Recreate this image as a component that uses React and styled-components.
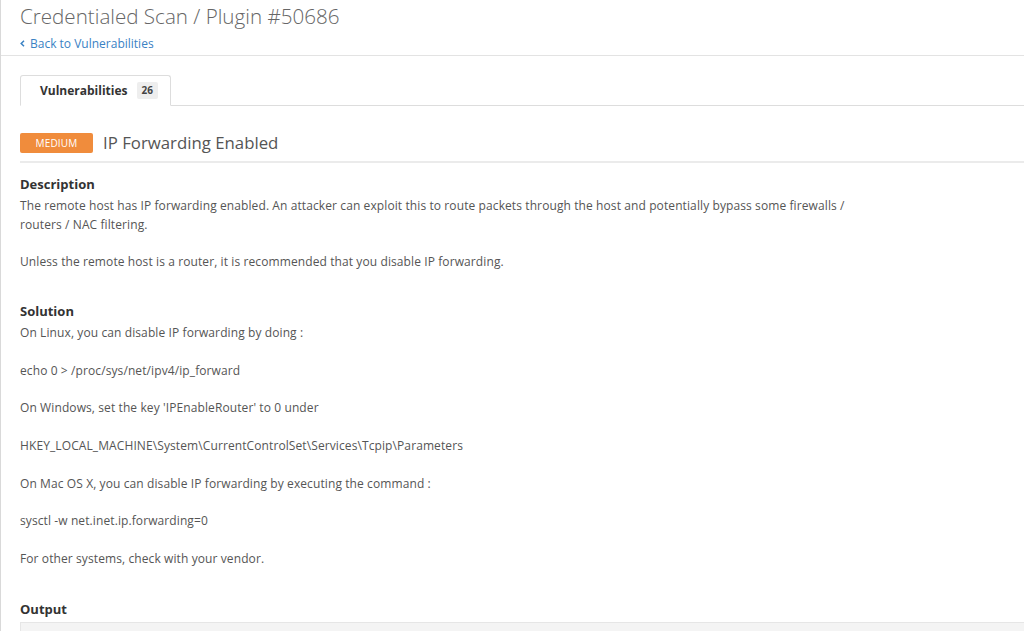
import React from "react";
import styled, { createGlobalStyle } from "styled-components";

const Global = createGlobalStyle`
  html, body { margin: 0; padding: 0; background: #fff; }
  body { font-family: "Open Sans", "Noto Sans", sans-serif; color: #555; }
`;

const Page = styled.div`
  min-height: 631px;
  border-left: 1px solid #d9d9d9;
  box-sizing: border-box;
  overflow: hidden;
`;

const Header = styled.header`
  padding: 3px 19px 0 19px;
  height: 52px;
  border-bottom: 1px solid #e3e3e3;
`;

const Title = styled.h1`
  margin: 0;
  font-size: 20.6px;
  font-weight: 300;
  color: #666;
  line-height: 27px;
`;

const BackLink = styled.a`
  display: inline-flex;
  align-items: center;
  gap: 5px;
  font-size: 12px;
  color: #3a82c4;
  text-decoration: none;
  line-height: 16px;
`;

const Body = styled.main`
  padding: 20px 0 0 19px;
`;

const Tabs = styled.div`
  display: flex;
  align-items: flex-end;
  border-bottom: 1px solid #ddd;
  height: 29px;
`;

const Tab = styled.div`
  display: flex;
  align-items: center;
  gap: 9px;
  height: 29px;
  padding: 0 12px 0 19px;
  margin-bottom: -1px;
  border: 1px solid #ddd;
  border-bottom-color: #fff;
  border-radius: 3px 3px 0 0;
  background: #fff;
  font-size: 12px;
  font-weight: 700;
  color: #333;
`;

const Count = styled.span`
  background: #eee;
  border-radius: 2px;
  padding: 1px 5px;
  font-size: 10px;
  font-weight: 700;
  color: #444;
  line-height: 15px;
`;

const VulnHeader = styled.div`
  display: flex;
  align-items: center;
  gap: 10px;
  margin-top: 25px;
  padding-bottom: 7px;
  border-bottom: 2px solid #ebebeb;
`;

const Severity = styled.span`
  display: inline-flex;
  align-items: center;
  justify-content: center;
  width: 73px;
  height: 20px;
  background: #f08c3c;
  border-radius: 2px;
  color: #fff;
  font-size: 10px;
  letter-spacing: 0.2px;
`;

const VulnTitle = styled.h2`
  margin: 0;
  font-size: 16.8px;
  font-weight: 400;
  color: #555;
`;

const Section = styled.section`
  max-width: ${(p) => (p.$wide ? "none" : "850px")};
  margin-top: ${(p) => p.$top}px;
`;

const SectionTitle = styled.h3`
  margin: 0;
  font-size: 13px;
  font-weight: 700;
  color: #333;
  line-height: 18px;
`;

const Text = styled.div`
  margin-top: 4px;
  font-size: 12px;
  line-height: 18.8px;
  letter-spacing: 0.1px;
  white-space: pre-wrap;
  color: #555;
`;

const OutputBox = styled.div`
  margin-top: 4px;
  height: 30px;
  background: #f4f4f4;
  border-top: 1px solid #e6e6e6;
  border-left: 1px solid #e6e6e6;
`;

const Chevron = () => (
  <svg width="5" height="7" viewBox="0 0 5 7">
    <path d="M4 0.8 L1.2 3.5 L4 6.2" fill="none" stroke="#3a82c4" strokeWidth="1.5" />
  </svg>
);

const description = `The remote host has IP forwarding enabled. An attacker can exploit this to route packets through the host and potentially bypass some firewalls /
routers / NAC filtering.

Unless the remote host is a router, it is recommended that you disable IP forwarding.`;

const solution = `On Linux, you can disable IP forwarding by doing :

echo 0 > /proc/sys/net/ipv4/ip_forward

On Windows, set the key 'IPEnableRouter' to 0 under

HKEY_LOCAL_MACHINE\\System\\CurrentControlSet\\Services\\Tcpip\\Parameters

On Mac OS X, you can disable IP forwarding by executing the command :

sysctl -w net.inet.ip.forwarding=0

For other systems, check with your vendor.`;

export default function App() {
  return (
    <Page>
      <Global />
      <Header>
        <Title>Credentialed Scan / Plugin #50686</Title>
        <BackLink href="#">
          <Chevron />
          Back to Vulnerabilities
        </BackLink>
      </Header>
      <Body>
        <Tabs>
          <Tab>
            Vulnerabilities <Count>26</Count>
          </Tab>
        </Tabs>
        <VulnHeader>
          <Severity>MEDIUM</Severity>
          <VulnTitle>IP Forwarding Enabled</VulnTitle>
        </VulnHeader>
        <Section $top={12}>
          <SectionTitle>Description</SectionTitle>
          <Text>{description}</Text>
        </Section>
        <Section $top={30}>
          <SectionTitle>Solution</SectionTitle>
          <Text>{solution}</Text>
        </Section>
        <Section $top={31} $wide>
          <SectionTitle>Output</SectionTitle>
          <OutputBox />
        </Section>
      </Body>
    </Page>
  );
}
